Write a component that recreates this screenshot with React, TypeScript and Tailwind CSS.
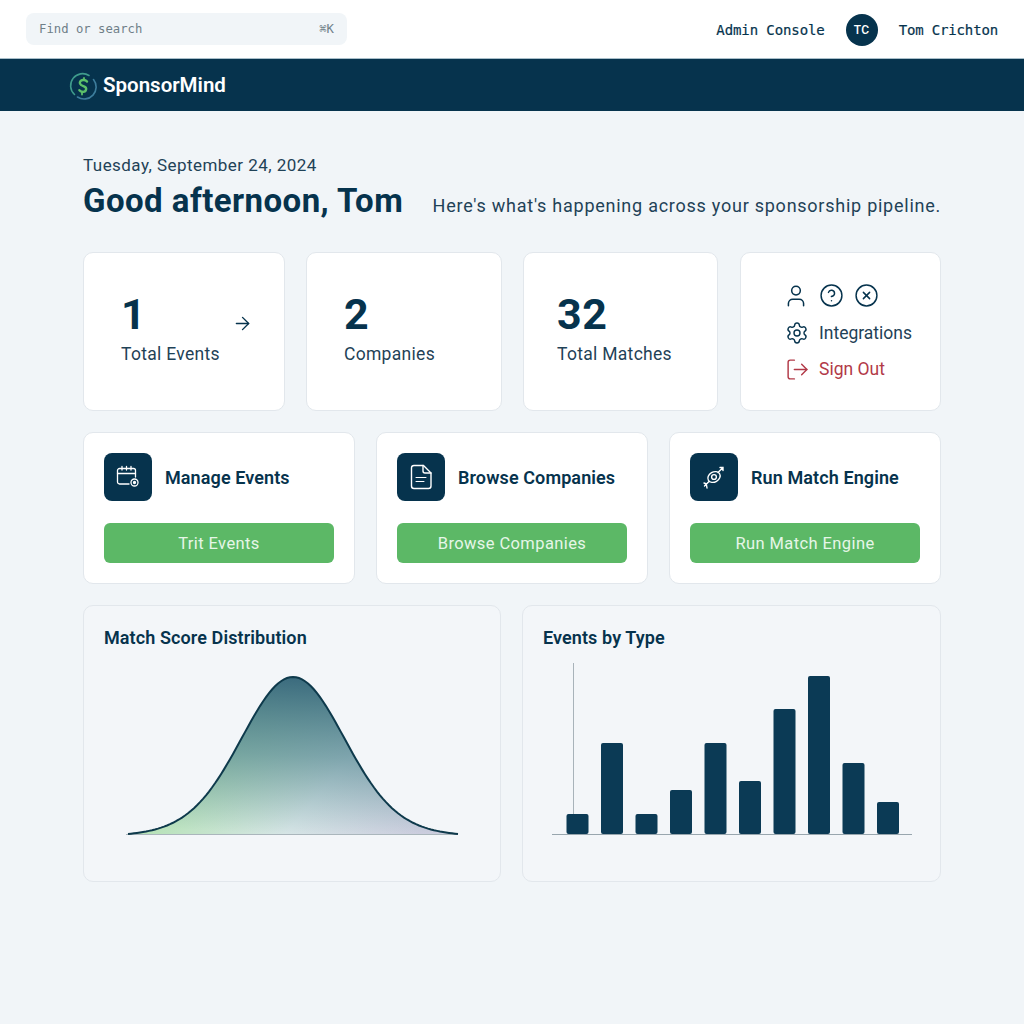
import { ArrowRight, CircleHelp, CircleX, LogOut, Settings, User } from "lucide-react";
import type { ReactNode } from "react";

const sans = "font-['Roboto',sans-serif]";
const mono = "font-['DejaVu_Sans_Mono',monospace]";

const stats = [
  { value: "1", label: "Total Events", box: "w-[202px] pl-[37px]", arrow: true },
  { value: "2", label: "Companies", box: "w-[196px] pl-[37px]", arrow: false },
  { value: "32", label: "Total Matches", box: "w-[195px] pl-[33px]", arrow: false },
];

const barHeights = [20, 91, 20, 44, 91, 53, 125, 158, 71, 32];

function bell(d: number) {
  return 0.88 * Math.exp(-(d * d) / (2 * 50 * 50)) + 0.12 * Math.exp(-(d * d) / (2 * 80 * 80));
}

// bell curve between x=16 and x=348 in the chart's own coordinates, ends pulled down to the baseline
function curvePoints() {
  const end = bell(165);
  const points: string[] = [];
  for (let x = 18; x <= 348; x += 3) {
    const h = (bell(x - 183) - end) / (1 - end);
    points.push(`${x},${(170 - 157 * h).toFixed(2)}`);
  }
  return points.join(" L");
}

function Logo() {
  return (
    <svg width="28" height="28" viewBox="0 0 28 28" fill="none" strokeLinecap="round">
      <path d="M20 3.500A12 12 0 0 0 5.500 22.500" stroke="#3f9c8c" strokeWidth="1.600" />
      <path d="M8.500 25A12 12 0 0 0 24.500 7.500" stroke="#3d7d9c" strokeWidth="1.600" />
      <path d="M18 9.500c-1-1.200-2.400-1.700-4-1.500-2.400.3-3.600 2-3 3.700.6 1.700 2.500 2.100 3.900 2.600 1.600.6 2.600 1.600 2.200 3.200-.4 1.700-2.200 2.600-4.100 2.200-1.100-.2-2-.8-2.600-1.500" stroke="#5cc06a" strokeWidth="2.400" />
      <path d="M15 6v2M13 20.500v2" stroke="#5cc06a" strokeWidth="1.800" />
    </svg>
  );
}

function CalendarIcon() {
  return (
    <svg width="26" height="26" viewBox="0 0 26 26" fill="none" stroke="white" strokeWidth="1.300" strokeLinecap="round">
      <path d="M14 20H4.500A2 2 0 0 1 2.500 18V6.500a2 2 0 0 1 2-2h14a2 2 0 0 1 2 2V13" />
      <path d="M2.500 9.500h18M7 2.500v3.500M11.500 2.500v3.500M16 2.500v3.500" />
      <circle cx="19.500" cy="18.500" r="3.500" />
      <circle cx="19.500" cy="18.500" r="1" fill="white" />
    </svg>
  );
}

function DocumentIcon() {
  return (
    <svg width="26" height="28" viewBox="0 0 26 28" fill="none" stroke="white" strokeWidth="1.400" strokeLinecap="round" strokeLinejoin="round">
      <path d="M6 2.500h9.500L23 10v13a2.500 2.500 0 0 1-2.500 2.500H6A2.500 2.500 0 0 1 3.500 23V5A2.500 2.500 0 0 1 6 2.500z" />
      <path d="M15 2.500V8a2 2 0 0 0 2 2h6" />
      <path d="M8 14.500h10M8 18.500h8" strokeWidth="1" />
    </svg>
  );
}

function TargetIcon() {
  return (
    <svg width="26" height="26" viewBox="0 0 26 26" fill="none" stroke="white" strokeWidth="1.400" strokeLinecap="round">
      <ellipse cx="13" cy="13" rx="6.500" ry="5" transform="rotate(-30 13 13)" />
      <circle cx="13" cy="13" r="2.400" />
      <path d="M17 8.500l4.500-4.500M19 3.500h3v3M8 17.500l-4.500 4.500M3 19l2.500 1M6 24l-.5-3" />
    </svg>
  );
}

function StatCard({ value, label, box, arrow }: { value: string; label: string; box: string; arrow: boolean }) {
  return (
    <div className={`${box} relative flex h-[159px] flex-col justify-center rounded-[10px] border border-[#e2e7ec] bg-white pb-[8px]`}>
      <p className="text-[43px] leading-[48px] font-bold tracking-[0.5px] text-[#06334d]">{value}</p>
      <p className="mt-[4px] text-[17.500px] leading-[24px] tracking-[0.3px] text-[#1f4257]">{label}</p>
      {arrow && <ArrowRight className="absolute top-[60px] left-[148px] text-[#06334d]" size={21} strokeWidth={1.600} />}
    </div>
  );
}

function ActionCard({ icon, title, action }: { icon: ReactNode; title: string; action: string }) {
  return (
    <div className="flex h-[152px] min-w-0 flex-1 flex-col justify-between rounded-[10px] border border-[#e2e7ec] bg-white p-[20px]">
      <div className="flex items-center gap-[13px]">
        <div className="flex h-[48px] w-[48px] items-center justify-center rounded-[8px] bg-[#06334d]">{icon}</div>
        <p className="text-[18px] font-semibold tracking-[0.1px] text-[#06334d]">{title}</p>
      </div>
      <button className="h-[40px] rounded-[6px] bg-[#5cb866] pt-[2px] text-[16.500px] tracking-[0.4px] text-[#e6f6e8]">{action}</button>
    </div>
  );
}

function ChartCard({ title, width, children }: { title: string; width: string; children: ReactNode }) {
  return (
    <div className={`${width} h-[277px] min-w-0 rounded-[10px] border border-[#e2e7ec] bg-[#f3f6f9] pt-[19px]`}>
      <p className="pl-[20px] text-[18px] leading-[26px] font-semibold tracking-[0.1px] text-[#06334d]">{title}</p>
      {children}
    </div>
  );
}

export default function App() {
  const curve = curvePoints();
  return (
    <div className={`${sans} h-[1024px] bg-[#f1f5f8]`}>
      <header className={`${mono} flex h-[58px] items-center justify-between bg-white px-[26px] [-webkit-text-stroke:0.2px]`}>
        <div className="flex h-[32px] w-[321px] items-center justify-between rounded-[8px] bg-[#f1f5f8] px-[13px] pt-[1px] text-[12.250px] text-[#6f7f88] [-webkit-text-stroke:0px]">
          <span>Find or search</span>
          <span>⌘K</span>
        </div>
        <div className="mt-[2px] flex items-center text-[14px] tracking-[-0.1px] text-[#06334d]">
          <span>Admin Console</span>
          <span className={`${sans} mx-[21px] flex h-[32px] w-[32px] items-center justify-center rounded-full bg-[#06334d] text-[12px] font-medium tracking-[0.5px] text-white [-webkit-text-stroke:0px]`}>TC</span>
          <span className="tracking-[-0.15px]">Tom Crichton</span>
        </div>
      </header>

      <div className="flex h-[53px] items-center gap-[6px] border-t border-[#a9bfca] bg-[#06334d] pt-[1px] pl-[69px]">
        <Logo />
        <span className="text-[20.500px] font-semibold text-white">SponsorMind</span>
      </div>

      <main className="px-[83px] pt-[42px]">
        <p className="text-[17px] leading-[24px] tracking-[0.45px] text-[#1f4257]">Tuesday, September 24, 2024</p>
        <div className="mt-[3px] flex items-end justify-between">
          <h1 className="text-[33px] leading-[42px] font-bold tracking-[0.45px] text-[#06334d]">Good afternoon, Tom</h1>
          <p className="pb-[3px] text-[18px] leading-[26px] tracking-[0.75px] text-[#1f4257]">Here's what's happening across your sponsorship pipeline.</p>
        </div>

        <div className="mt-[30px] flex gap-[21px]">
          {stats.map((s) => (
            <StatCard key={s.label} {...s} />
          ))}
          <div className="ml-auto flex h-[159px] w-[201px] flex-col justify-center gap-[12px] rounded-[10px] border border-[#e2e7ec] bg-white pt-[1px] pl-[42px] text-[17.500px] leading-[22px]">
            <div className="flex items-center gap-[10px] text-[#06334d]">
              <User size={26} strokeWidth={1.400} />
              <CircleHelp size={25} strokeWidth={1.400} />
              <CircleX size={25} strokeWidth={1.400} />
            </div>
            <div className="ml-[2px] flex items-center gap-[10px] text-[#1f4257]">
              <Settings size={24} strokeWidth={1.400} className="text-[#06334d]" />
              <span>Integrations</span>
            </div>
            <div className="ml-[2px] flex items-center gap-[9px] text-[#b23a48]">
              <LogOut size={25} strokeWidth={1.400} />
              <span>Sign Out</span>
            </div>
          </div>
        </div>

        <div className="mt-[21px] flex gap-[21px]">
          <ActionCard icon={<CalendarIcon />} title="Manage Events" action="Trit Events" />
          <ActionCard icon={<DocumentIcon />} title="Browse Companies" action="Browse Companies" />
          <ActionCard icon={<TargetIcon />} title="Run Match Engine" action="Run Match Engine" />
        </div>

        <div className="mt-[21px] flex gap-[21px]">
          <ChartCard title="Match Score Distribution" width="w-[418px]">
            <svg width="364" height="180" viewBox="0 0 364 180" className="mt-[13px] ml-[26px]" fill="none">
              <defs>
                <linearGradient id="curveBase" x1="0" y1="0.6" x2="1" y2="1">
                  <stop offset="0.15" stopColor="#b4e2b4" />
                  <stop offset="0.55" stopColor="#d6e5e6" />
                  <stop offset="0.9" stopColor="#d3d2e3" />
                </linearGradient>
                <linearGradient id="curveTop" x1="0.55" y1="0" x2="0.45" y2="1">
                  <stop offset="0" stopColor="#3a6a7d" stopOpacity="1" />
                  <stop offset="0.5" stopColor="#4a7e8c" stopOpacity="0.62" />
                  <stop offset="1" stopColor="#4a7e8c" stopOpacity="0" />
                </linearGradient>
              </defs>
              <path d={`M${curve} Z`} fill="url(#curveBase)" />
              <path d={`M${curve} Z`} fill="url(#curveTop)" />
              <line x1="16" y1="170.500" x2="348" y2="170.500" stroke="#aab6bc" />
              <path d={`M${curve}`} stroke="#0e3a4c" strokeWidth="2" />
            </svg>
          </ChartCard>
          <ChartCard title="Events by Type" width="flex-1">
            <svg width="416" height="184" viewBox="0 0 416 184" className="mt-[12px]" fill="none">
              <line x1="50.500" y1="0" x2="50.500" y2="151" stroke="#a8b3ba" />
              <line x1="29" y1="171.500" x2="389" y2="171.500" stroke="#98a6ae" />
              {barHeights.map((h, i) => (
                <rect key={i} x={43.500 + i * 34.500} y={171 - h} width="22" height={h} rx="2" fill="#0b3a55" />
              ))}
            </svg>
          </ChartCard>
        </div>
      </main>
    </div>
  );
}
